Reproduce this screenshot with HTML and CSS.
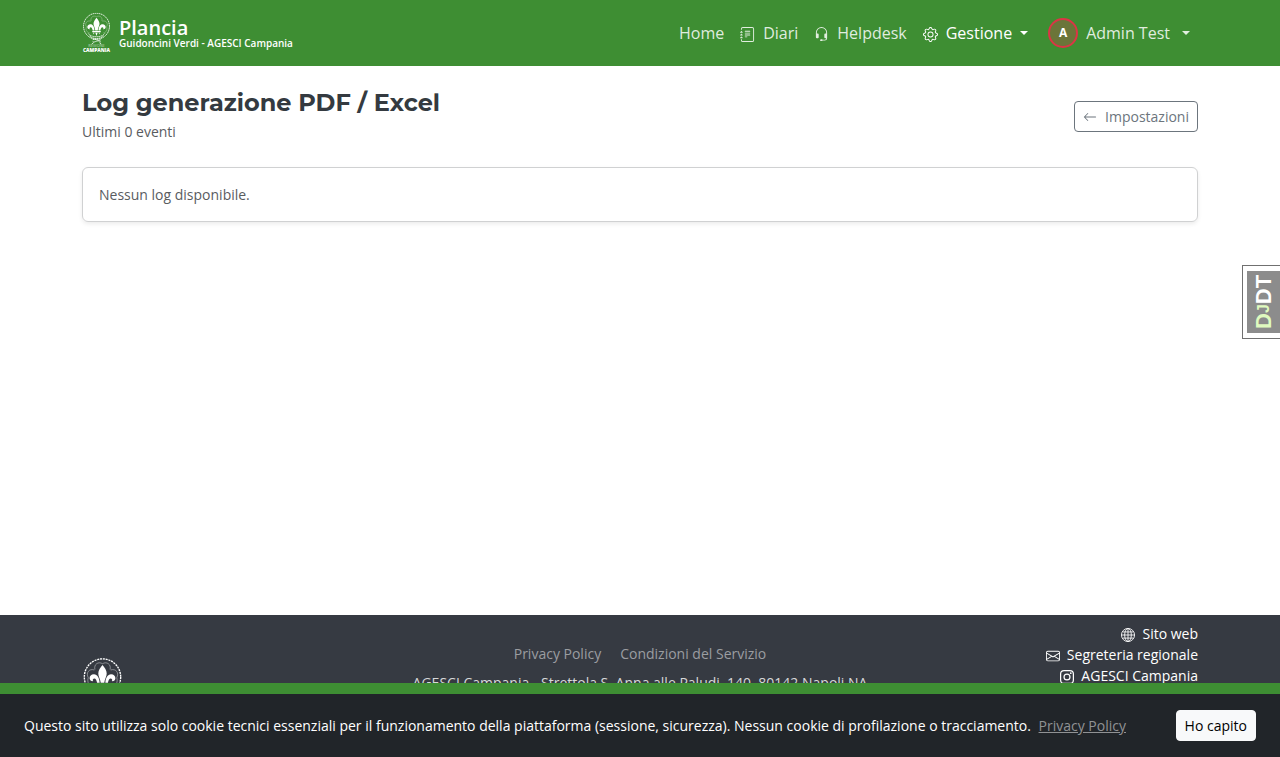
FILE: index.html
```html
<!DOCTYPE html>
<html lang="it">
<head>
    <meta charset="UTF-8">
    <meta name="viewport" content="width=device-width, initial-scale=1.0">
    <title>Log generazione PDF / Excel - Plancia</title>
    <link rel="stylesheet" href="styles.css">
</head>
<body>
    <!-- Icone condivise -->
    <svg class="sprite" aria-hidden="true">
        <symbol id="lily" viewBox="0 0 30 42">
            <circle cx="15" cy="14" r="13.4" fill="none" stroke="currentColor" stroke-width="1" stroke-dasharray="1.5 .6"/>
            <g fill="none" stroke="currentColor" stroke-width=".4" opacity=".75">
                <path d="M9.4 8.5C8.5 4.5 12 2.4 15 4.2C18 2.4 21.5 4.5 20.6 8.5"/>
                <path d="M9 8.8C5 7.6 2.6 11 4.5 14.5C3.5 18 5 20.5 8 21M21 8.8C25 7.6 27.4 11 25.5 14.5C26.5 18 25 20.5 22 21"/>
            </g>
            <g fill="currentColor">
                <path d="M15 5.2C13.4 7.4 11.9 9 11.9 11.4C11.9 13.8 13.5 15.3 13.7 18.3H16.3C16.5 15.3 18.1 13.8 18.1 11.4C18.1 9 16.6 7.4 15 5.2Z"/>
                <path d="M12.9 18.3C12.7 14.6 11.3 12 8.7 12C6.700 12 5.400 13.400 5.500 15.100C5.600 16.500 6.900 17.300 8.200 17C7.600 16.500 7.700 15.500 8.500 15.200C10 14.900 10.700 16.600 11 18.300Z"/>
                <path d="M17.1 18.3C17.3 14.6 18.7 12 21.3 12C23.3 12 24.6 13.4 24.5 15.1C24.4 16.5 23.1 17.3 21.8 17C22.4 16.5 22.3 15.5 21.5 15.2C20 14.9 19.3 16.6 19 18.3Z"/>
                <path d="M10.6 18.900H19.400V20.200H10.600ZM13.800 20.700H16.200L15 24ZM11.600 20.700H12.900L11.900 22.600ZM17.100 20.700H18.400L18.100 22.600Z"/>
            </g>
            <g fill="none" stroke="currentColor" stroke-width=".8">
                <path d="M6.5 21.5C9 26 21 26 23.5 21.5M8 24C11 27.6 19 27.6 22 24" stroke-dasharray="1.6 .4"/>
                <path d="M11 28C13 26 17 30 19.5 28M11 30C13 31.5 17 27 19.5 30.5M12 31L10 32.5M18 31L20 32.5"/>
            </g>
        </symbol>
        <symbol id="journal" viewBox="0 0 16 16">
            <path d="M5 10.5a.5.5 0 0 1 .5-.5h2a.5.5 0 0 1 0 1h-2a.5.5 0 0 1-.5-.5m0-2a.5.5 0 0 1 .5-.5h5a.5.5 0 0 1 0 1h-5a.5.5 0 0 1-.5-.5m0-2a.5.5 0 0 1 .5-.5h5a.5.5 0 0 1 0 1h-5a.5.5 0 0 1-.5-.5m0-2a.5.5 0 0 1 .5-.5h5a.5.5 0 0 1 0 1h-5a.5.5 0 0 1-.5-.5"/>
            <path d="M3 0h10a2 2 0 0 1 2 2v12a2 2 0 0 1-2 2H3a2 2 0 0 1-2-2v-1h1v1a1 1 0 0 0 1 1h10a1 1 0 0 0 1-1V2a1 1 0 0 0-1-1H3a1 1 0 0 0-1 1v1H1V2a2 2 0 0 1 2-2"/>
            <path d="M1 5v-.5a.5.5 0 0 1 1 0V5h.5a.5.5 0 0 1 0 1h-2a.5.5 0 0 1 0-1zm0 3v-.5a.5.5 0 0 1 1 0V8h.5a.5.5 0 0 1 0 1h-2a.5.5 0 0 1 0-1zm0 3v-.5a.5.5 0 0 1 1 0v.5h.5a.5.5 0 0 1 0 1h-2a.5.5 0 0 1 0-1z"/>
        </symbol>
        <symbol id="headset" viewBox="0 0 16 16">
            <path d="M8 1a5 5 0 0 0-5 5v1h1a1 1 0 0 1 1 1v3a1 1 0 0 1-1 1H3a1 1 0 0 1-1-1V6a6 6 0 1 1 12 0v6a2.5 2.5 0 0 1-2.5 2.5H9.366a1 1 0 0 1-.866.5h-1a1 1 0 1 1 0-2h1a1 1 0 0 1 .866.5H11.5A1.5 1.5 0 0 0 13 12h-1a1 1 0 0 1-1-1V8a1 1 0 0 1 1-1h1V6a5 5 0 0 0-5-5"/>
        </symbol>
        <symbol id="gear" viewBox="0 0 16 16">
            <path d="M8 4.754a3.246 3.246 0 1 0 0 6.492 3.246 3.246 0 0 0 0-6.492M5.754 8a2.246 2.246 0 1 1 4.492 0 2.246 2.246 0 0 1-4.492 0"/>
            <path d="M9.796 1.343c-.527-1.79-3.065-1.79-3.592 0l-.094.319a.873.873 0 0 1-1.255.52l-.292-.16c-1.64-.892-3.433.902-2.54 2.541l.159.292a.873.873 0 0 1-.52 1.255l-.319.094c-1.79.527-1.79 3.065 0 3.592l.319.094a.873.873 0 0 1 .52 1.255l-.16.292c-.892 1.64.901 3.434 2.541 2.54l.292-.159a.873.873 0 0 1 1.255.52l.094.319c.527 1.79 3.065 1.79 3.592 0l.094-.319a.873.873 0 0 1 1.255-.52l.292.16c1.64.893 3.434-.902 2.54-2.541l-.159-.292a.873.873 0 0 1 .52-1.255l.319-.094c1.79-.527 1.79-3.065 0-3.592l-.319-.094a.873.873 0 0 1-.52-1.255l.16-.292c.893-1.64-.902-3.433-2.541-2.54l-.292.159a.873.873 0 0 1-1.255-.52zm-2.633.283c.246-.835 1.428-.835 1.674 0l.094.319a1.873 1.873 0 0 0 2.693 1.115l.291-.16c.764-.415 1.6.42 1.184 1.185l-.159.292a1.873 1.873 0 0 0 1.116 2.692l.318.094c.835.246.835 1.428 0 1.674l-.319.094a1.873 1.873 0 0 0-1.115 2.693l.16.291c.415.764-.42 1.6-1.185 1.184l-.291-.159a1.873 1.873 0 0 0-2.693 1.116l-.094.318c-.246.835-1.428.835-1.674 0l-.094-.319a1.873 1.873 0 0 0-2.692-1.115l-.292.16c-.764.415-1.6-.42-1.184-1.185l.159-.291A1.873 1.873 0 0 0 1.945 8.93l-.319-.094c-.835-.246-.835-1.428 0-1.674l.319-.094A1.873 1.873 0 0 0 3.06 4.377l-.16-.292c-.415-.764.42-1.6 1.185-1.184l.292.159a1.873 1.873 0 0 0 2.692-1.115z"/>
        </symbol>
        <symbol id="arrow-left" viewBox="0 0 16 16">
            <path d="M15 8a.5.5 0 0 0-.5-.5H2.707l3.147-3.146a.5.5 0 1 0-.708-.708l-4 4a.5.5 0 0 0 0 .708l4 4a.5.5 0 0 0 .708-.708L2.707 8.5H14.5A.5.5 0 0 0 15 8"/>
        </symbol>
        <symbol id="globe" viewBox="0 0 16 16">
            <g fill="none" stroke="currentColor">
                <circle cx="8" cy="8" r="7.5"/>
                <ellipse cx="8" cy="8" rx="3.8" ry="7.5"/>
                <path d="M8 .5v15M.5 8h15M1.7 4.5h12.6M1.7 11.5h12.6"/>
            </g>
        </symbol>
        <symbol id="envelope" viewBox="0 0 16 16">
            <path d="M0 4a2 2 0 0 1 2-2h12a2 2 0 0 1 2 2v8a2 2 0 0 1-2 2H2a2 2 0 0 1-2-2zm2-1a1 1 0 0 0-1 1v.217l7 4.2 7-4.2V4a1 1 0 0 0-1-1zm13 2.383-4.708 2.825L15 11.105zm-.034 6.876-5.64-3.471L8 9.583l-1.326-.795-5.64 3.47A1 1 0 0 0 2 13h12a1 1 0 0 0 .966-.741M1 11.105l4.708-2.897L1 5.383z"/>
        </symbol>
        <symbol id="instagram" viewBox="0 0 16 16">
            <rect x=".7" y=".7" width="14.6" height="14.6" rx="4" fill="none" stroke="currentColor" stroke-width="1.4"/>
            <circle cx="8" cy="8" r="3.4" fill="none" stroke="currentColor" stroke-width="1.4"/>
            <circle cx="12.3" cy="3.7" r="1"/>
        </symbol>
    </svg>

    <header class="navbar">
        <div class="container navbar-inner">
            <a class="brand" href="#">
                <svg class="brand-logo" viewBox="0 0 30 42" aria-hidden="true">
                    <use href="#lily" width="30" height="42"/>
                    <text class="logo-region" x="15" y="36">REGIONE</text>
                    <text class="logo-name" x="15" y="41">CAMPANIA</text>
                </svg>
                <span class="brand-text">
                    <span class="brand-name">Plancia</span>
                    <span class="brand-sub">Guidoncini Verdi - AGESCI Campania</span>
                </span>
            </a>
            <nav class="nav">
                <a class="nav-link" href="#">Home</a>
                <a class="nav-link" href="#"><svg class="icon"><use href="#journal"/></svg>Diari</a>
                <a class="nav-link" href="#"><svg class="icon"><use href="#headset"/></svg>Helpdesk</a>
                <button class="nav-link active" type="button"><svg class="icon"><use href="#gear"/></svg>Gestione<span class="caret"></span></button>
                <button class="nav-link user-link" type="button"><span class="avatar">A</span>Admin Test<span class="caret"></span></button>
            </nav>
        </div>
    </header>

    <main class="container main">
        <div class="page-head">
            <div>
                <h1>Log generazione PDF / Excel</h1>
                <p class="muted">Ultimi 0 eventi</p>
            </div>
            <a class="btn btn-outline" href="#"><svg class="icon"><use href="#arrow-left"/></svg>Impostazioni</a>
        </div>
        <div class="card">
            <p class="muted">Nessun log disponibile.</p>
        </div>
    </main>

    <footer class="footer">
        <div class="container footer-inner">
            <svg class="footer-logo" aria-hidden="true"><use href="#lily"/></svg>
            <div class="footer-center">
                <div class="footer-legal">
                    <a href="#">Privacy Policy</a>
                    <a href="#">Condizioni del Servizio</a>
                </div>
                <p class="address">AGESCI Campania - Strettola S. Anna alle Paludi, 140, 80142 Napoli NA</p>
            </div>
            <ul class="footer-links">
                <li><a href="#"><svg class="icon"><use href="#globe"/></svg>Sito web</a></li>
                <li><a href="#"><svg class="icon"><use href="#envelope"/></svg>Segreteria regionale</a></li>
                <li><a href="#"><svg class="icon"><use href="#instagram"/></svg>AGESCI Campania</a></li>
            </ul>
        </div>
    </footer>

    <div class="cookie-bar">
        <p>Questo sito utilizza solo cookie tecnici essenziali per il funzionamento della piattaforma (sessione, sicurezza). Nessun cookie di profilazione o tracciamento. <a href="#">Privacy Policy</a></p>
        <button class="btn btn-light" type="button">Ho capito</button>
    </div>

    <button class="djdt" type="button"><span class="djdt-label"><span class="djdt-dj">D<small>J</small></span>DT</span></button>
</body>
</html>
```
FILE: styles.css
```css
* {
    box-sizing: border-box;
}
body {
    margin: 0;
    min-height: 100vh;
    display: flex;
    flex-direction: column;
    font-family: "Open Sans", sans-serif;
    font-size: 14px;
    line-height: 21px;
    color: #212529;
    background-color: #fff;
}
h1, p, ul {
    margin: 0;
    padding: 0;
}
button {
    font: inherit;
    cursor: pointer;
}
a {
    text-decoration: none;
}
.sprite {
    position: absolute;
    width: 0;
    height: 0;
}
.icon {
    width: 14px;
    height: 14px;
    margin-top: 2px;
    fill: currentColor;
    flex-shrink: 0;
}
.container {
    width: 100%;
    max-width: 1140px;
    margin: 0 auto;
    padding: 0 12px;
}

/* Navbar */
.navbar {
    background-color: #3e8e33;
    color: #fff;
}
.navbar-inner {
    display: flex;
    align-items: center;
    justify-content: space-between;
    min-height: 66px;
}
.brand {
    display: flex;
    align-items: center;
    gap: 8px;
    color: #fff;
}
.brand-logo {
    width: 29px;
    height: 42px;
    overflow: visible;
}
.logo-region, .logo-name {
    fill: currentColor;
    font-family: "Open Sans", sans-serif;
    font-size: 4px;
    text-anchor: middle;
}
.logo-region {
    opacity: 0.6;
}
.logo-name {
    font-size: 5px;
    font-weight: 800;
}
.brand-text {
    display: flex;
    flex-direction: column;
}
.brand-name {
    font-size: 20px;
    font-weight: 600;
    line-height: 20px;
}
.brand-sub {
    font-size: 10px;
    font-weight: 600;
    line-height: 10px;
}
.nav {
    display: flex;
    align-items: center;
}
.nav-link {
    display: flex;
    align-items: center;
    gap: 8px;
    padding: 8px;
    font-size: 16px;
    line-height: 24px;
    color: rgba(255, 255, 255, 0.85);
    background: none;
    border: 0;
}
.nav-link .icon {
    width: 15px;
    height: 15px;
}
.nav-link.active {
    color: #fff;
    font-weight: 500;
}
.user-link {
    margin-left: 4px;
}
.user-link .caret {
    margin-left: 4px;
}
.caret {
    border-top: 4px solid;
    border-left: 4px solid transparent;
    border-right: 4px solid transparent;
}
.avatar {
    width: 30px;
    height: 30px;
    margin: -3px 0;
    display: flex;
    align-items: center;
    justify-content: center;
    border: 2px solid #dc3545;
    border-radius: 50%;
    background-color: #6b7539;
    color: #fff;
    font-size: 12px;
    font-weight: 700;
}

/* Contenuto */
.main {
    flex: 1;
    padding-top: 24px;
}
.page-head {
    display: flex;
    align-items: center;
    justify-content: space-between;
    margin-bottom: 25px;
}
h1 {
    font-family: Montserrat, Inter, sans-serif;
    font-size: 24px;
    font-weight: 700;
    line-height: 26px;
    color: #343a40;
    margin-bottom: 5px;
}
.muted {
    color: #595c5f;
}
.card {
    padding: 16px;
    border: 1px solid #d0d1d2;
    border-radius: 6px;
    box-shadow: 0 2px 4px rgba(0, 0, 0, 0.08);
}
.btn {
    display: flex;
    align-items: center;
    gap: 8px;
    padding: 4px 8px;
    border: 1px solid;
    border-radius: 4px;
}
.btn-outline {
    color: #6c757d;
    border-color: #6c757d;
}
.btn-light {
    color: #000;
    background-color: #f8f9fa;
    border-color: #f8f9fa;
    white-space: nowrap;
}

/* Footer */
.footer {
    min-height: 142px;
    padding: 8px 0;
    background-color: #363a42;
    color: #fff;
}
.footer-inner {
    display: grid;
    grid-template-columns: 1fr 2fr 1fr;
}
.footer-logo {
    width: 41px;
    height: 57px;
    margin-top: 35px;
}
.footer-center {
    padding-top: 20px;
    text-align: center;
}
.footer-legal {
    display: flex;
    justify-content: center;
    gap: 19px;
    margin-bottom: 8px;
}
.footer-legal a {
    color: #9b9da1;
}
.address {
    color: #d7d8d9;
}
.footer-links {
    list-style: none;
}
.footer-links a {
    display: flex;
    align-items: center;
    justify-content: flex-end;
    gap: 7px;
    color: #fff;
}

/* Avviso cookie */
.cookie-bar {
    position: fixed;
    left: 0;
    right: 0;
    bottom: 0;
    display: flex;
    align-items: center;
    justify-content: space-between;
    gap: 16px;
    padding: 16px 24px;
    border-top: 11px solid #3e8e33;
    background-color: #212529;
    color: #fff;
}
.cookie-bar a {
    margin-left: 4px;
    color: #909294;
    text-decoration: underline;
}

/* Django Debug Toolbar */
.djdt {
    position: fixed;
    top: 265px;
    right: 0;
    width: 38px;
    height: 74px;
    padding: 5px 0 5px 4px;
    border: 1px solid #707070;
    border-right: 0;
    background-color: #fff;
}
.djdt-label {
    display: block;
    width: 100%;
    height: 100%;
    writing-mode: vertical-rl;
    transform: rotate(180deg);
    font-family: "Liberation Sans", Arial, sans-serif;
    font-size: 22px;
    font-weight: 700;
    line-height: 34px;
    text-align: center;
    color: #fff;
    background-color: #8c8c8c;
}
.djdt-dj {
    color: #dffabf;
}
.djdt-dj small {
    font-size: 16px;
}
```
